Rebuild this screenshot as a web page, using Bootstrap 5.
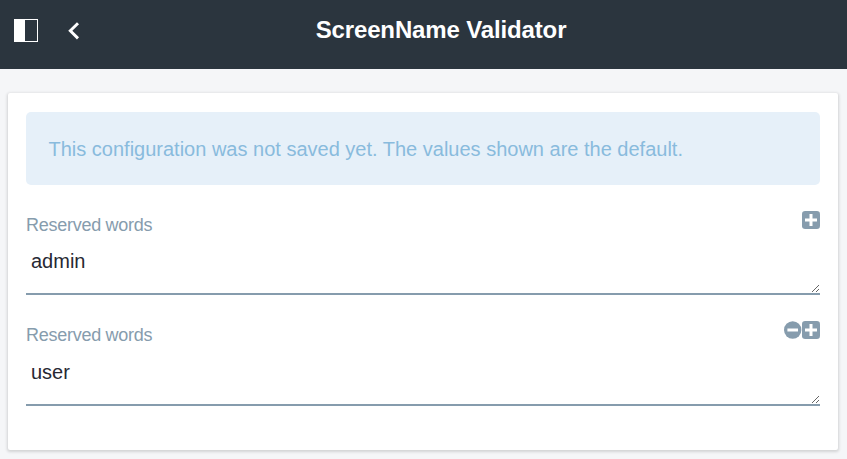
<!DOCTYPE html>
<html lang="en">
<head>
<meta charset="utf-8">
<meta name="viewport" content="width=device-width, initial-scale=1">
<title>ScreenName Validator</title>
<link href="https://cdn.jsdelivr.net/npm/bootstrap@5.3.0/dist/css/bootstrap.min.css" rel="stylesheet">
<style>
body { background: #f5f6f8; font-family: "Liberation Sans", Arial, sans-serif; color: #2b333b; min-height: 100vh; }
.topbar { height: 69px; background: #2b353e; padding: 0 14px 8px; }
.topbar .side { width: 120px; gap: 30px; }
.topbar h1 { font-size: 24px; line-height: 30px; letter-spacing: -.14px; padding: 0 0 2px 35px; }
.page { padding: 24px 9px 9px 8px; }
.panel { height: 357px; border-radius: 2px; padding: 19px 18px 0; box-shadow: 0 1px 3px 1px rgba(0,0,0,.14); }
.notice { height: 73px; padding: 1px 22.5px 0; border-radius: 5px; background: #e6f0f9; color: #89bbdd; font-size: 20px; margin-bottom: 26px; }
.field { height: 110px; }
.field + .field { height: 111px; }
.field label { font-size: 18px; line-height: 28px; letter-spacing: -.27px; color: #869cad; }
.tools { color: #869cad; }
.field textarea { height: 56px; padding: 10px 5px 0; font-size: 20px; line-height: 24px; border: 0; border-bottom: 2px solid #869cad; border-radius: 0; color: #272833; outline: 0; background: transparent; resize: vertical; overflow: hidden; }
.field + .field textarea { height: 57px; padding-top: 11px; }
</style>
<script src="https://cdn.jsdelivr.net/npm/bootstrap@5.3.0/dist/js/bootstrap.bundle.min.js"></script>
</head>
<body>
<header class="topbar d-flex align-items-center justify-content-between text-white">
  <div class="side d-flex align-items-center">
    <svg width="24" height="23" viewBox="0 0 24 23" shape-rendering="crispEdges"><path d="M0.5.5h23v22H.5z" fill="none" stroke="#fff"/><path d="M0 0h11v23H0z" fill="#fff"/></svg>
    <svg width="12" height="18" viewBox="0 0 12 18"><path d="M10 1.2 2.3 8.8l7.7 7.6" fill="none" stroke="#fff" stroke-width="2.9"/></svg>
  </div>
  <h1 class="fw-bold m-0">ScreenName Validator</h1>
  <div class="side"></div>
</header>
<main class="page">
  <section class="panel bg-white">
    <div class="notice d-flex align-items-center">This configuration was not saved yet. The values shown are the default.</div>
    <div class="field">
      <div class="d-flex justify-content-between align-items-start">
        <label for="word1">Reserved words</label>
        <div class="tools d-flex">
          <svg width="18" height="18" viewBox="0 0 18 18"><rect width="18" height="18" rx="3.2" fill="currentColor"/><path d="M9 3v12M3 9h12" stroke="#fff" stroke-width="3"/></svg>
        </div>
      </div>
      <textarea id="word1" class="d-block w-100" rows="1">admin</textarea>
    </div>
    <div class="field">
      <div class="d-flex justify-content-between align-items-start">
        <label for="word2">Reserved words</label>
        <div class="tools d-flex">
          <svg width="18" height="18" viewBox="0 0 18 18"><circle cx="8.7" cy="9" r="8.7" fill="currentColor"/><path d="M3.4 9h10.6" stroke="#fff" stroke-width="3"/></svg>
          <svg width="18" height="18" viewBox="0 0 18 18"><rect width="18" height="18" rx="3.2" fill="currentColor"/><path d="M9 3v12M3 9h12" stroke="#fff" stroke-width="3"/></svg>
        </div>
      </div>
      <textarea id="word2" class="d-block w-100" rows="1">user</textarea>
    </div>
  </section>
</main>
</body>
</html>
